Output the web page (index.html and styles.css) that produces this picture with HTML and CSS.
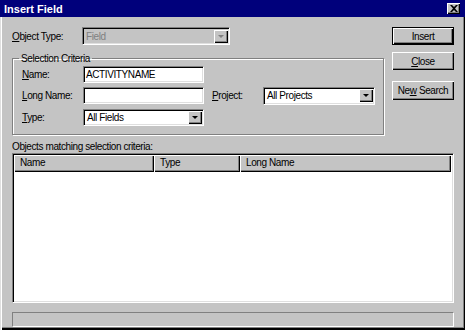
FILE: index.html
```html
<!DOCTYPE html>
<html lang="en">
<head>
  <meta charset="UTF-8" />
  <title>Insert Field</title>
  <link rel="stylesheet" href="styles.css">
</head>
<body>
  <div class="window">
    <div class="titlebar">
      <span class="title">Insert Field</span>
      <span class="close-btn">
        <svg width="8" height="7" viewBox="0 0 8 7"><path d="M0 0h2l2 2 2-2h2L5 3.5 8 7H6L4 5 2 7H0l3-3.5z" fill="#000"/></svg>
      </span>
    </div>

    <div class="dialog">
      <div class="top">
        <div class="left">
          <div class="type-row">
            <span class="lbl lbl-obj"><u>O</u>bject Type:</span>
            <div class="combo disabled combo-obj">
              <span class="combo-text">Field</span>
              <span class="combo-arrow"><i class="tri"></i></span>
            </div>
          </div>

          <fieldset class="criteria">
            <legend>Selection Criteria</legend>
            <div class="row row-name">
              <span class="lbl"><u>N</u>ame:</span>
              <div class="field">ACTIVITYNAME</div>
            </div>
            <div class="row row-long">
              <span class="lbl"><u>L</u>ong Name:</span>
              <div class="field"></div>
              <span class="lbl lbl-proj"><u>P</u>roject:</span>
              <div class="combo combo-proj">
                <span class="combo-text">All Projects</span>
                <span class="combo-arrow"><i class="tri"></i></span>
              </div>
            </div>
            <div class="row">
              <span class="lbl"><u>T</u>ype:</span>
              <div class="combo combo-type">
                <span class="combo-text">All Fields</span>
                <span class="combo-arrow"><i class="tri"></i></span>
              </div>
            </div>
          </fieldset>
        </div>

        <div class="buttons">
          <button class="btn default">Insert</button>
          <button class="btn"><u>C</u>lose</button>
          <button class="btn btn-search">Ne<u>w</u> Search</button>
        </div>
      </div>

      <div class="list-label">Objects matching selection criteria:</div>
      <div class="list">
        <div class="list-head">
          <div class="col col-name">Name</div>
          <div class="col col-type">Type</div>
          <div class="col col-long">Long Name</div>
        </div>
        <div class="list-body"></div>
      </div>

      <div class="statusbar"></div>
    </div>
  </div>
</body>
</html>
```

FILE: styles.css
```css
body { margin: 0; background: #c4c4c4; font-family: "Liberation Sans", Arial, sans-serif; font-size: 10px; letter-spacing: -0.4px; color: #000; }
u { text-decoration: underline; }

.window {
  width: 465px; height: 330px; box-sizing: border-box; background: #c4c4c4; padding-bottom: 1px;
  box-shadow: inset 1px 0 #dfdfdf, inset 2px 0 #fff, inset -1px -2px #000, inset -2px -3px #808080;
}
.titlebar { height: 17px; background: #00007b; display: flex; align-items: center; justify-content: space-between; padding: 0 5px 0 4px; }
.title { color: #fff; font-weight: bold; font-size: 11px; letter-spacing: 0; }
.close-btn {
  width: 13px; height: 11px; background: #c4c4c4; display: flex; align-items: center; justify-content: center;
  box-shadow: inset 1px 1px #fff, inset -1px -1px #000, inset -2px -2px #808080;
}

.dialog { padding: 10px 11px 0 12px; }
.top { display: flex; gap: 8px; }
.left { width: 372px; }

.lbl { display: inline-block; width: 61px; line-height: 17px; white-space: nowrap; }
.lbl-obj { width: 70px; }
.type-row { display: flex; align-items: center; height: 18px; }

.combo {
  height: 17px; box-sizing: border-box; background: #fff; display: flex; align-items: center; justify-content: space-between;
  border-top: 1px solid #808080; border-left: 1px solid #808080; border-bottom: 1px solid #fff; border-right: 1px solid #fff;
  box-shadow: inset 1px 1px #000, inset -1px -1px #dfdfdf;
}
.combo-text { padding-left: 3px; white-space: nowrap; }
.combo-arrow {
  width: 14px; height: 13px; margin-right: 1px; background: #c4c4c4; display: flex; align-items: center; justify-content: center;
  box-shadow: inset 1px 1px #fff, inset -1px -1px #000, inset -2px -2px #808080;
}
.tri { width: 0; height: 0; border-left: 3px solid transparent; border-right: 3px solid transparent; border-top: 3px solid #000; }
.combo.disabled { background: #c4c4c4; height: 18px; }
.combo.disabled .combo-text { color: #808080; }
.combo.disabled .tri { border-top-color: #808080; }
.combo-obj { width: 148px; }
.combo-type { width: 121px; }
.combo-proj { width: 112px; height: 18px; }

.criteria {
  margin: 7px 0 0; padding: 1px 0 8px 9px; box-sizing: border-box; width: 372px;
  border: 1px solid #808080; box-shadow: 1px 1px 0 #fff, inset 1px 1px 0 #fff;
}
.criteria legend { padding: 0 2px; margin-left: -3px; line-height: 13px; }
.row { display: flex; align-items: center; height: 17px; }
.row-name { margin-bottom: 4px; }
.row-long { margin-bottom: 5px; }
.field {
  width: 121px; height: 17px; box-sizing: border-box; background: #fff; padding-left: 2px; line-height: 15px;
  border-top: 1px solid #808080; border-left: 1px solid #808080; border-bottom: 1px solid #fff; border-right: 1px solid #fff;
  box-shadow: inset 1px 1px #000, inset -1px -1px #dfdfdf;
}
.lbl-proj { width: 51px; margin-left: 8px; }

.buttons { display: flex; flex-direction: column; width: 62px; }
.btn {
  width: 62px; height: 18px; margin: 0 0 7px; padding: 0; background: #c4c4c4; border: none;
  font-family: inherit; font-size: 10px; letter-spacing: -0.4px; color: #000;
  box-shadow: inset 1px 1px #fff, inset -1px -1px #000, inset -2px -2px #808080;
}
.btn.default { box-shadow: inset 0 0 0 1px #000, inset 2px 2px #fff, inset -2px -2px #000, inset -3px -3px #808080; }
.btn-search { height: 19px; margin-top: 4px; }

.list-label { margin-top: 5px; line-height: 13px; }
.list {
  margin-top: 0; height: 150px; box-sizing: border-box; background: #fff; display: flex; flex-direction: column;
  border-top: 1px solid #808080; border-left: 1px solid #808080; border-bottom: 1px solid #fff; border-right: 1px solid #fff;
  box-shadow: inset 1px 1px #000, inset -1px -1px #dfdfdf; padding: 1px 2px 0 1px;
}
.list-head { display: flex; height: 17px; }
.col {
  height: 17px; box-sizing: border-box; background: #c4c4c4; line-height: 16px; padding-left: 6px;
  box-shadow: inset 1px 1px #fff, inset -1px -1px #000, inset -2px -2px #808080;
}
.col-name { width: 140px; }
.col-type { width: 86px; }
.col-long { width: 211px; }

.statusbar {
  margin-top: 9px; height: 15px; box-sizing: border-box;
  border-top: 1px solid #808080; border-left: 1px solid #808080; border-bottom: 1px solid #fff; border-right: 1px solid #fff;
}
```
